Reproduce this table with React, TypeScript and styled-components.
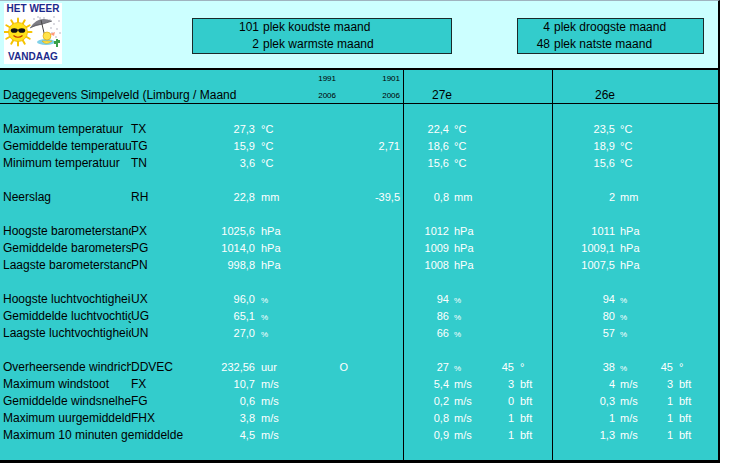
import React from "react";
import styled, { createGlobalStyle } from "styled-components";

const GlobalStyle = createGlobalStyle`
  * { box-sizing: border-box; }
  body {
    margin: 0;
    background: #ffffff;
    font-family: "Liberation Sans", Arial, sans-serif;
  }
`;

type Line = {
  label: string;
  wide?: boolean;
  code?: string;
  v?: string;
  u?: string;
  a?: string;
  b?: string;
  c1?: string;
  cu1?: string;
  c2?: string;
  cu2?: string;
  d1?: string;
  du1?: string;
  d2?: string;
  du2?: string;
};

const rows: (Line | null)[] = [
  null,
  { label: "Maximum temperatuur", code: "TX", v: "27,3", u: "°C", c1: "22,4", cu1: "°C", d1: "23,5", du1: "°C" },
  { label: "Gemiddelde temperatuur", code: "TG", v: "15,9", u: "°C", b: "2,71", c1: "18,6", cu1: "°C", d1: "18,9", du1: "°C" },
  { label: "Minimum temperatuur", code: "TN", v: "3,6", u: "°C", c1: "15,6", cu1: "°C", d1: "15,6", du1: "°C" },
  null,
  { label: "Neerslag", code: "RH", v: "22,8", u: "mm", b: "-39,5", c1: "0,8", cu1: "mm", d1: "2", du1: "mm" },
  null,
  { label: "Hoogste barometerstand", code: "PX", v: "1025,6", u: "hPa", c1: "1012", cu1: "hPa", d1: "1011", du1: "hPa" },
  { label: "Gemiddelde barometerstand", code: "PG", v: "1014,0", u: "hPa", c1: "1009", cu1: "hPa", d1: "1009,1", du1: "hPa" },
  { label: "Laagste barometerstand", code: "PN", v: "998,8", u: "hPa", c1: "1008", cu1: "hPa", d1: "1007,5", du1: "hPa" },
  null,
  { label: "Hoogste luchtvochtigheid", code: "UX", v: "96,0", u: "%", c1: "94", cu1: "%", d1: "94", du1: "%" },
  { label: "Gemiddelde luchtvochtigheid", code: "UG", v: "65,1", u: "%", c1: "86", cu1: "%", d1: "80", du1: "%" },
  { label: "Laagste luchtvochtigheid", code: "UN", v: "27,0", u: "%", c1: "66", cu1: "%", d1: "57", du1: "%" },
  null,
  { label: "Overheersende windrichting", code: "DDVEC", v: "232,56", u: "uur", a: "O", c1: "27", cu1: "%", c2: "45", cu2: "°", d1: "38", du1: "%", d2: "45", du2: "°" },
  { label: "Maximum windstoot", code: "FX", v: "10,7", u: "m/s", c1: "5,4", cu1: "m/s", c2: "3", cu2: "bft", d1: "4", du1: "m/s", d2: "3", du2: "bft" },
  { label: "Gemiddelde windsnelheid", code: "FG", v: "0,6", u: "m/s", c1: "0,2", cu1: "m/s", c2: "0", cu2: "bft", d1: "0,3", du1: "m/s", d2: "1", du2: "bft" },
  { label: "Maximum uurgemiddelde", code: "FHX", v: "3,8", u: "m/s", c1: "0,8", cu1: "m/s", c2: "1", cu2: "bft", d1: "1", du1: "m/s", d2: "1", du2: "bft" },
  { label: "Maximum 10 minuten gemiddelde", wide: true, v: "4,5", u: "m/s", c1: "0,9", cu1: "m/s", c2: "1", cu2: "bft", d1: "1,3", du1: "m/s", d2: "1", du2: "bft" },
];

function Logo() {
  return (
    <LogoBox>
      <LogoText>HET WEER</LogoText>
      <svg width="58" height="36" viewBox="0 0 58 36">
        {/* rain */}
        {[
          [30, 4], [34, 2], [40, 3], [46, 5], [50, 9], [53, 14], [48, 18], [52, 22], [44, 20],
          [36, 3], [55, 6], [50, 2], [42, 7], [56, 18], [54, 27], [47, 13],
        ].map(([x, y], i) => (
          <circle key={i} cx={x} cy={y} r="0.7" fill="#9a9aa8" />
        ))}
        {/* sun rays */}
        {Array.from({ length: 12 }).map((_, i) => {
          const ang = (i * Math.PI) / 6;
          return (
            <line
              key={i}
              x1={14 + Math.cos(ang) * 10}
              y1={17 + Math.sin(ang) * 10}
              x2={14 + Math.cos(ang) * 13.5}
              y2={17 + Math.sin(ang) * 13.5}
              stroke="#f5c400"
              strokeWidth="2"
              strokeLinecap="round"
            />
          );
        })}
        <circle cx="14" cy="17" r="9.5" fill="#ffe21a" stroke="#f0b000" strokeWidth="0.8" />
        <ellipse cx="10.2" cy="15.5" rx="3.4" ry="2.3" fill="#111" />
        <ellipse cx="17.8" cy="15.5" rx="3.4" ry="2.3" fill="#111" />
        <line x1="13" y1="15" x2="15" y2="15" stroke="#111" strokeWidth="1" />
        <path d="M9.5 20.5 Q14 24 18.5 20.5" stroke="#c03000" strokeWidth="1.2" fill="none" />
        {/* umbrella */}
        <path d="M26 13 Q34 0 48 6 Z" fill="#7d7d85" />
        <path d="M26 13 Q32 9 37 9.5 Q42 8 48 6" stroke="#5a5a60" strokeWidth="0.8" fill="none" />
        <line x1="37" y1="5" x2="41" y2="22" stroke="#444" strokeWidth="1" />
        {/* figure */}
        <ellipse cx="42" cy="27" rx="9" ry="3" fill="#7fd0e8" />
        <circle cx="43" cy="21" r="4" fill="#ffe24a" stroke="#d8a000" strokeWidth="0.6" />
        <path d="M38 26 Q42 31 48 26 Z" fill="#ffe24a" stroke="#d8a000" strokeWidth="0.5" />
        <path d="M46 19 L51 17 L50 21 Z" fill="#ff9a7a" />
        <rect x="52" y="24" width="2" height="8" fill="#3aa04a" />
        <rect x="50" y="26" width="2" height="3" fill="#3aa04a" />
        <rect x="54" y="25" width="2" height="3" fill="#3aa04a" />
      </svg>
      <LogoText>VANDAAG</LogoText>
    </LogoBox>
  );
}

function Ranking({ items, numWidth, width }: { items: [string, string][]; numWidth: number; width: number }) {
  return (
    <RankBox $numWidth={numWidth} $width={width}>
      {items.map(([n, t]) => (
        <React.Fragment key={t}>
          <RankNum>{n}</RankNum>
          <span>{t}</span>
        </React.Fragment>
      ))}
    </RankBox>
  );
}

function Unit({ children }: { children?: string }) {
  if (children === "%") return <Small>%</Small>;
  return <>{children}</>;
}

function DataRow({ line }: { line: Line | null }) {
  const l = line || ({ label: "" } as Line);
  return (
    <Row>
      <Label $span={l.wide ? 2 : 1}>{l.label}</Label>
      {!l.wide && <Cell>{l.code}</Cell>}
      <Cell $align="right" $light>{l.v}</Cell>
      <Cell $pl={6} $light><Unit>{l.u}</Unit></Cell>
      <Cell $align="right" $pr={l.a === "O" ? 4 : 16} $light>{l.a}</Cell>
      <Cell $align="right" $pr={3} $light>{l.b}</Cell>
      <Cell $align="right" $line $light>{l.c1}</Cell>
      <Cell $pl={5} $light><Unit>{l.cu1}</Unit></Cell>
      <Cell $align="right" $light>{l.c2}</Cell>
      <Cell $pl={6} $light>{l.cu2}</Cell>
      <Cell $align="right" $line $light>{l.d1}</Cell>
      <Cell $pl={5} $light><Unit>{l.du1}</Unit></Cell>
      <Cell $align="right" $light>{l.d2}</Cell>
      <Cell $pl={6} $light>{l.du2}</Cell>
    </Row>
  );
}

export default function App() {
  return (
    <>
      <GlobalStyle />
      <Frame>
        <Header>
          <Logo />
          <RankSlot $left={130}>
            <Ranking
              width={260}
              numWidth={66}
              items={[
                ["101", "plek koudste maand"],
                ["2", "plek warmste maand"],
              ]}
            />
          </RankSlot>
          <RankSlot $left={65}>
            <Ranking
              width={187}
              numWidth={32}
              items={[
                ["4", "plek droogste maand"],
                ["48", "plek natste maand"],
              ]}
            />
          </RankSlot>
        </Header>
        <Table>
          <Row $height={17}>
            <Cell $span={4} />
            <Cell $align="right" $pr={16} $size={8}>1991</Cell>
            <Cell $align="right" $pr={3} $size={8}>1901</Cell>
            <Cell $span={4} $line />
            <Cell $span={4} $line />
          </Row>
          <Row $height={17} $ruled>
            <Label $span={4}>Daggegevens Simpelveld (Limburg / Maand</Label>
            <Cell $align="right" $pr={16} $size={8}>2006</Cell>
            <Cell $align="right" $pr={3} $size={8}>2006</Cell>
            <Cell $span={4} $line $pl={28}>27e</Cell>
            <Cell $span={4} $line $pl={42}>26e</Cell>
          </Row>
          {rows.map((r, i) => (
            <DataRow key={i} line={r} />
          ))}
          <Filler>
            <Cell $span={6} />
            <Cell $span={4} $line />
            <Cell $span={4} $line />
          </Filler>
        </Table>
      </Frame>
    </>
  );
}

const COLUMNS = "131px 69px 55px 45px 52px 51px 46px 46px 19px 38px 63px 39px 19px 45px";

const Frame = styled.div`
  width: 720px;
  height: 463px;
  display: flex;
  flex-direction: column;
  border-top: 1px solid #9fb3bf;
  border-right: 2px solid #000;
  border-bottom: 3px solid #000;
  background: #33cccc;
`;

const Header = styled.div`
  height: 69px;
  flex: none;
  display: flex;
  align-items: flex-start;
  background: #ccffff;
  border-bottom: 2px solid #000;
`;

const LogoBox = styled.div`
  margin: 2px 0 0 4px;
  width: 58px;
  height: 61px;
  background: #fff;
  display: flex;
  flex-direction: column;
  align-items: center;
`;

const LogoText = styled.div`
  font-family: "Liberation Sans", Arial, sans-serif;
  font-weight: 700;
  font-size: 10px;
  line-height: 12px;
  color: #1c2a8c;
`;

const RankSlot = styled.div<{ $left: number }>`
  margin-left: ${(p) => p.$left}px;
  margin-top: 17px;
`;

const RankBox = styled.div<{ $numWidth: number; $width: number }>`
  width: ${(p) => p.$width}px;
  height: 36px;
  border: 1px solid #1a2a2a;
  background: #33cccc;
  display: grid;
  grid-template-columns: ${(p) => p.$numWidth}px 1fr;
  column-gap: 4px;
  font-size: 12px;
  line-height: 17px;
  color: #000;
`;

const RankNum = styled.span`
  text-align: right;
`;

const Table = styled.div`
  flex: 1;
  display: flex;
  flex-direction: column;
`;

const Row = styled.div<{ $height?: number; $ruled?: boolean }>`
  display: grid;
  grid-template-columns: ${COLUMNS};
  height: ${(p) => p.$height || 17}px;
  border-bottom: ${(p) => (p.$ruled ? "1px solid #000" : "none")};
  flex: none;
`;

const Filler = styled(Row)`
  flex: 1;
  height: auto;
`;

const Cell = styled.div<{
  $align?: "left" | "right";
  $pl?: number;
  $pr?: number;
  $line?: boolean;
  $light?: boolean;
  $size?: number;
  $span?: number;
}>`
  grid-column: span ${(p) => p.$span || 1};
  text-align: ${(p) => p.$align || "left"};
  padding-left: ${(p) => p.$pl || 0}px;
  padding-right: ${(p) => p.$pr || 0}px;
  border-left: ${(p) => (p.$line ? "1px solid #000" : "none")};
  color: ${(p) => (p.$light ? "#ffffff" : "#000000")};
  font-size: ${(p) => p.$size || (p.$light ? 11 : 12)}px;
  line-height: 17px;
  white-space: nowrap;
`;

const Label = styled.div<{ $span?: number }>`
  grid-column: span ${(p) => p.$span || 1};
  padding: 0 3px 0 3px;
  font-size: 12px;
  line-height: 17px;
  color: #000;
  white-space: nowrap;
  overflow: hidden;
`;

const Small = styled.span`
  font-size: 8px;
`;
